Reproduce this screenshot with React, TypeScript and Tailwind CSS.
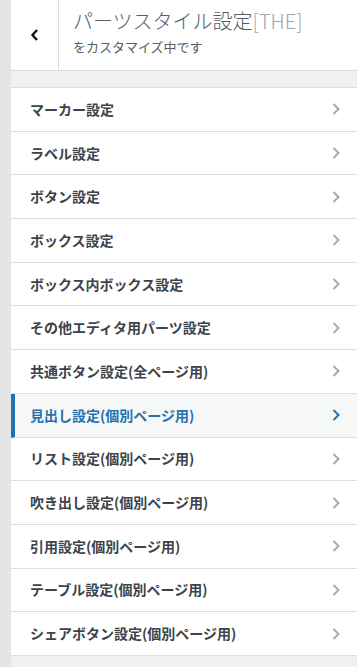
import React from 'react';

const SECTIONS = [
  'マーカー設定',
  'ラベル設定',
  'ボタン設定',
  'ボックス設定',
  'ボックス内ボックス設定',
  'その他エディタ用パーツ設定',
  '共通ボタン設定(全ページ用)',
  '見出し設定(個別ページ用)',
  'リスト設定(個別ページ用)',
  '吹き出し設定(個別ページ用)',
  '引用設定(個別ページ用)',
  'テーブル設定(個別ページ用)',
  'シェアボタン設定(個別ページ用)',
];

const ACTIVE = '見出し設定(個別ページ用)';

function Chevron({ className }: { className: string }) {
  return (
    <svg width="10" height="14" viewBox="0 0 10 14" className={className}>
      <path d="M2.5 2 L7.5 7 L2.5 12" fill="none" stroke="currentColor" strokeWidth="2" />
    </svg>
  );
}

export default function App() {
  return (
    <div
      className="flex h-[667px] w-[357px] overflow-hidden bg-[#e5e5e5]"
      style={{ fontFamily: '"Noto Sans CJK JP", "Noto Sans", "Liberation Sans", sans-serif' }}
    >
      <div className="w-[11px] shrink-0" />
      <div className="flex flex-1 flex-col bg-[#f0f0f1]">
        <header className="flex h-[71px] shrink-0 border-b border-[#dddddd] bg-white">
          <button className="flex w-[48px] items-center justify-center border-r border-[#dddddd] text-[#111]">
            <svg width="12" height="16" viewBox="0 0 12 16">
              <path d="M8 3 L3.5 8 L8 13" fill="none" stroke="currentColor" strokeWidth="2.4" />
            </svg>
          </button>
          <div className="flex flex-col pl-[14px] pt-[8px]">
            <h1 className="text-[20px] font-light leading-[26px] text-[#555d66]">
              パーツスタイル設定<span className="text-[#a0a5aa]">[THE]</span>
            </h1>
            <p className="mt-[4px] text-[13px] leading-[18px] text-[#555d66]">をカスタマイズ中です</p>
          </div>
        </header>

        <ul className="mt-[16px] border-t border-[#dddddd]">
          {SECTIONS.map((label) => {
            const isActive = label === ACTIVE;
            return (
              <li
                key={label}
                className={`flex h-[43.7px] items-center justify-between border-b border-[#dddddd] pr-[16px] ${
                  isActive
                    ? 'border-l-4 border-l-[#2271b1] bg-[#f6f7f7] pl-[15px] text-[#2271b1]'
                    : 'bg-white pl-[19px] text-[#3c434a]'
                }`}
              >
                <span className="text-[14px] font-semibold">{label}</span>
                <Chevron className={isActive ? 'text-[#2271b1]' : 'text-[#a7aaad]'} />
              </li>
            );
          })}
        </ul>
      </div>
    </div>
  );
}
